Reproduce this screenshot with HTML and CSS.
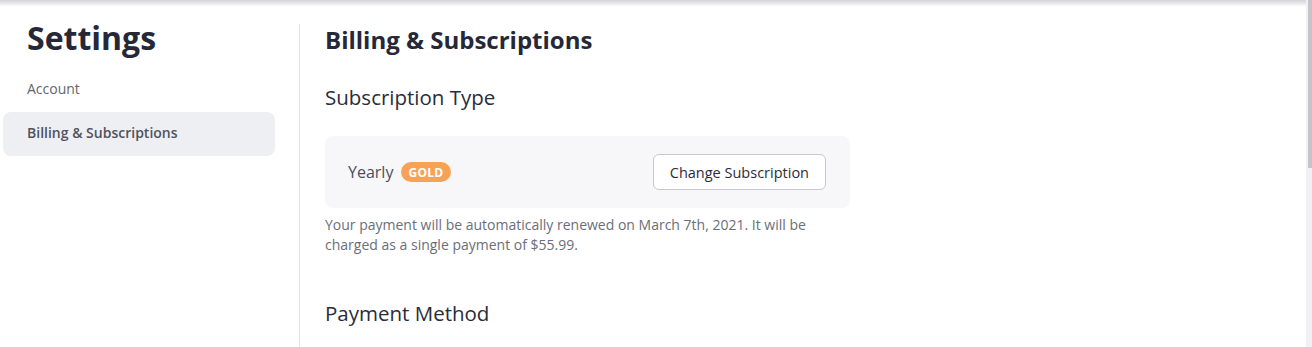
FILE: index.html
```html
<!DOCTYPE html>
<html lang="en">
<head>
<meta charset="utf-8">
<title>Settings - Billing &amp; Subscriptions</title>
<link rel="stylesheet" href="styles.css">
</head>
<body>
<div class="page">
  <aside class="sidebar">
    <h1 class="sidebar-title">Settings</h1>
    <nav class="nav">
      <a class="nav-item" href="#">Account</a>
      <a class="nav-item active" href="#">Billing &amp; Subscriptions</a>
    </nav>
  </aside>
  <main class="content">
    <h2 class="page-title">Billing &amp; Subscriptions</h2>
    <section class="section">
      <h3 class="section-title">Subscription Type</h3>
      <div class="plan-card">
        <div class="plan-info">
          <span class="plan-name">Yearly</span>
          <span class="badge">GOLD</span>
        </div>
        <button class="btn" type="button">Change Subscription</button>
      </div>
      <p class="plan-note">Your payment will be automatically renewed on March 7th, 2021. It will be charged as a single payment of $55.99.</p>
    </section>
    <section class="section payment">
      <h3 class="section-title">Payment Method</h3>
    </section>
  </main>
  <div class="scrollbar"><div class="scroll-thumb"></div></div>
</div>
</body>
</html>
```
FILE: styles.css
```css
* { box-sizing: border-box; }
html, body { margin: 0; padding: 0; height: 100%; }
body {
  font-family: "Open Sans", "Liberation Sans", sans-serif;
  color: #262837;
  background: #fff linear-gradient(#d4d4d9 0, #e6e6ea 3px, #fafafb 6px, #fff 7px) no-repeat;
  background-size: 100% 7px;
  overflow: hidden;
}
.page {
  position: relative;
  display: flex;
  min-height: 347px;
}
.sidebar {
  width: 299px;
  flex: none;
  padding: 18px 24px 0 3px;
}
.sidebar-title {
  margin: 0 0 10px 24px;
  font-size: 32px;
  line-height: 40px;
  font-weight: 700;
  color: #262837;
}
.nav { display: flex; flex-direction: column; }
.nav-item {
  display: flex;
  align-items: center;
  height: 44px;
  padding: 0 0 2px 24px;
  font-size: 14px;
  line-height: 20px;
  color: #62656f;
  text-decoration: none;
  border-radius: 8px;
}
.nav-item.active {
  background: #eeeff2;
  color: #50535f;
  font-weight: 600;
}
.content {
  flex: 1;
  margin-top: 24px;
  border-left: 1px solid #e3e3e7;
  padding: 0 0 0 25px;
}
.page-title {
  margin: 0;
  font-size: 24px;
  line-height: 32px;
  font-weight: 700;
  color: #262837;
}
.section-title {
  margin: 0;
  font-size: 20.5px;
  line-height: 28px;
  font-weight: 500;
  color: #2a2c3a;
}
.section { margin-top: 27px; }
.plan-card {
  margin-top: 25px;
  width: 525px;
  height: 72px;
  background: #f7f7f9;
  border-radius: 8px;
  padding: 0 24px 0 23px;
  display: flex;
  align-items: center;
  justify-content: space-between;
}
.plan-info { display: flex; align-items: center; gap: 8px; }
.plan-name {
  font-size: 16px;
  line-height: 22px;
  color: #4b4e5b;
}
.badge {
  display: inline-flex;
  align-items: center;
  height: 20px;
  padding: 0 7px;
  border-radius: 10px;
  background: #f8a257;
  color: #fff;
  font-size: 12px;
  font-weight: 700;
  letter-spacing: 0.3px;
}
.btn {
  height: 36px;
  padding: 0 16px;
  border: 1px solid #c6c7cf;
  border-radius: 6px;
  background: #fff;
  font-family: inherit;
  font-size: 14.5px;
  color: #2a2c3a;
}
.plan-note {
  margin: 7px 0 0;
  max-width: 525px;
  font-size: 14px;
  line-height: 20px;
  color: #6b6e7a;
}
.payment { margin-top: 44px; }
.scrollbar {
  position: absolute;
  top: 0;
  right: 0;
  width: 6px;
  height: 347px;
  background: #f1f1f3;
}
.scroll-thumb {
  margin-left: 2px;
  width: 4px;
  height: 168px;
  background: #c4c4cb;
}
```
